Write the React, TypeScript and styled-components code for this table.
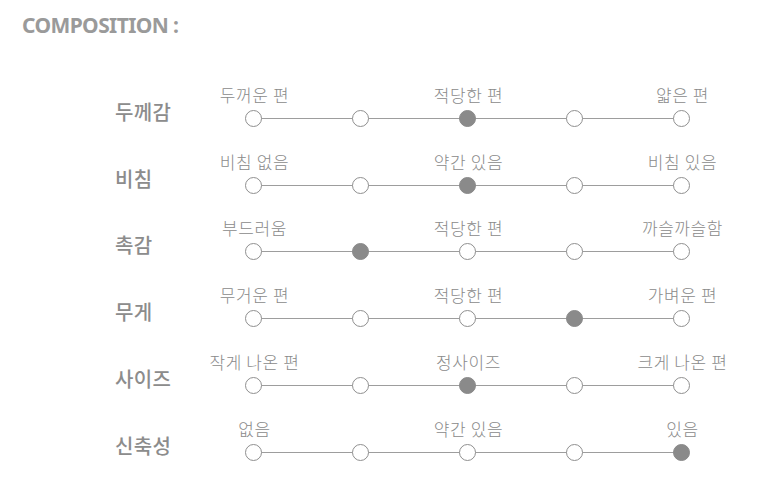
import React from "react";
import styled, { createGlobalStyle } from "styled-components";

const Global = createGlobalStyle`
  html, body { margin: 0; padding: 0; background: #ffffff; }
  body { font-family: "Noto Sans CJK KR", "Noto Sans", sans-serif; }
`;

const Page = styled.div`
  width: 768px;
  height: 486px;
  box-sizing: border-box;
  padding: 10px 0 0 22px;
  background: #fff;
`;

const Title = styled.h2`
  margin: 0;
  font-family: "Noto Sans", "Open Sans", sans-serif;
  font-weight: 700;
  font-size: 21px;
  line-height: 30px;
  color: #9a9a9a;
  letter-spacing: -0.6px;
`;

const List = styled.div`
  display: flex;
  flex-direction: column;
  margin-top: 28px;
  margin-left: 93px;
`;

const Row = styled.div`
  display: flex;
  align-items: flex-end;
  height: 66.8px;
  box-sizing: border-box;
  padding-bottom: 8px;
`;

const Label = styled.div`
  width: 84.5px;
  font-size: 20px;
  line-height: 24px;
  font-weight: 500;
  color: #8c8c8c;
  margin-bottom: 3px;
  letter-spacing: 0.3px;
`;

const Scale = styled.div`
  display: grid;
  grid-template-columns: repeat(5, 107px);
  row-gap: 5px;
`;

const Caption = styled.div`
  text-align: center;
  font-size: 17px;
  line-height: 20px;
  font-weight: 300;
  color: #8a8a8a;
  white-space: nowrap;
  letter-spacing: 0.6px;
  padding-left: 3px;
`;

const Cell = styled.div<{ $first: boolean; $last: boolean }>`
  position: relative;
  display: flex;
  justify-content: center;
  align-items: center;
  height: 17px;
  &::before, &::after {
    content: "";
    position: absolute;
    top: 8px;
    height: 1px;
    background: #9d9d9d;
    width: 50%;
  }
  &::before { left: 0; display: ${(p) => (p.$first ? "none" : "block")}; }
  &::after { right: 0; display: ${(p) => (p.$last ? "none" : "block")}; }
`;

const Dot = styled.span<{ $on: boolean }>`
  position: relative;
  z-index: 1;
  width: 17px;
  height: 17px;
  box-sizing: border-box;
  border-radius: 50%;
  border: 1px solid ${(p) => (p.$on ? "#8a8a8a" : "#8f8f8f")};
  background: ${(p) => (p.$on ? "#8a8a8a" : "#ffffff")};
`;

type Item = { name: string; left: string; mid: string; right: string; sel: number };

const items: Item[] = [
  { name: "두께감", left: "두꺼운 편", mid: "적당한 편", right: "얇은 편", sel: 2 },
  { name: "비침", left: "비침 없음", mid: "약간 있음", right: "비침 있음", sel: 2 },
  { name: "촉감", left: "부드러움", mid: "적당한 편", right: "까슬까슬함", sel: 1 },
  { name: "무게", left: "무거운 편", mid: "적당한 편", right: "가벼운 편", sel: 3 },
  { name: "사이즈", left: "작게 나온 편", mid: "정사이즈", right: "크게 나온 편", sel: 2 },
  { name: "신축성", left: "없음", mid: "약간 있음", right: "있음", sel: 4 },
];

export default function App() {
  return (
    <Page>
      <Global />
      <Title>COMPOSITION :</Title>
      <List>
        {items.map((it) => {
          const caps = [it.left, "", it.mid, "", it.right];
          return (
            <Row key={it.name}>
              <Label>{it.name}</Label>
              <Scale>
                {caps.map((c, i) => (
                  <Caption key={"c" + i}>{c}</Caption>
                ))}
                {caps.map((_, i) => (
                  <Cell key={"d" + i} $first={i === 0} $last={i === 4}>
                    <Dot $on={i === it.sel} />
                  </Cell>
                ))}
              </Scale>
            </Row>
          );
        })}
      </List>
    </Page>
  );
}
